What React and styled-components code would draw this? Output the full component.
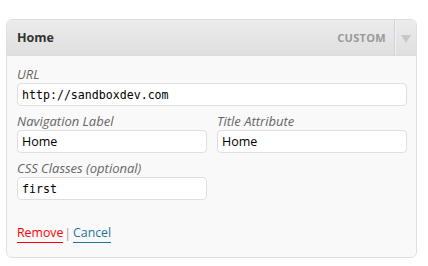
import React from 'react';
import styled, { createGlobalStyle } from 'styled-components';

const GlobalStyle = createGlobalStyle`
    body {
        margin: 0;
        background: #fff;
        font-family: "Open Sans", "Liberation Sans", sans-serif;
    }
`;

const Panel = styled.div`
    width: 409px;
    margin: 19px 0 0 6px;
    border: 1px solid #dfdfdf;
    border-radius: 6px;
    background: #f9f9f9;
    overflow: hidden;
`;

const Header = styled.div`
    height: 35px;
    display: flex;
    align-items: center;
    background: linear-gradient(to bottom, #ececec, #dfdfdf);
    border-bottom: 1px solid #dcdcdc;
`;

const Title = styled.div`
    flex: 1;
    padding-left: 10px;
    font-size: 12.5px;
    font-weight: 700;
    color: #333;
`;

const ItemType = styled.div`
    padding-right: 8px;
    font-size: 11px;
    font-weight: 700;
    color: #999;
    text-transform: uppercase;
    letter-spacing: 0.3px;
`;

const Toggle = styled.div`
    width: 22px;
    align-self: stretch;
    display: flex;
    align-items: center;
    justify-content: center;
    border-left: 1px solid #d2d2d2;
    box-shadow: inset 1px 0 0 #f2f2f2;
    padding-top: 3px;
    box-sizing: border-box;
`;

const Arrow = styled.div`
    width: 0;
    height: 0;
    border-left: 5px solid transparent;
    border-right: 5px solid transparent;
    border-top: 8px solid #c8c8c8;
`;

const Body = styled.div`
    padding: 10px 9px 14px 10px;
`;

const Row = styled.div`
    display: flex;
    gap: 10px;
    margin-bottom: 7px;
`;

const Field = styled.label`
    display: flex;
    flex-direction: column;
    width: ${p => (p.wide ? '390px' : '190px')};
`;

const Label = styled.span`
    font-size: 13px;
    font-style: italic;
    line-height: 17px;
    color: #666;
`;

const Input = styled.input`
    height: 23px;
    box-sizing: border-box;
    border: 1px solid #dfdfdf;
    border-radius: 4px;
    background: #fff;
    padding: 0 4px;
    font-family: ${p => (p.code ? '"DejaVu Sans Mono", "Liberation Mono", monospace' : '"Open Sans", "Liberation Sans", sans-serif')};
    font-size: ${p => (p.code ? '11.6px' : '12.5px')};
    color: #000;
    outline: none;
`;

const Actions = styled.div`
    margin-top: 24px;
    display: flex;
    align-items: center;
    font-size: 12.3px;
    line-height: 17px;
`;

const ActionLink = styled.a`
    color: ${p => p.color};
    text-decoration: none;
    border-bottom: 1px solid ${p => p.color};
    padding-bottom: 1px;
    cursor: pointer;
`;

const Sep = styled.span`
    color: #999;
    margin: 0 2px 0 1px;
`;

const App = () => {
    return (
        <>
            <GlobalStyle />
            <Panel>
                <Header>
                    <Title>Home</Title>
                    <ItemType>Custom</ItemType>
                    <Toggle><Arrow /></Toggle>
                </Header>
                <Body>
                    <Row>
                        <Field wide>
                            <Label>URL</Label>
                            <Input code defaultValue="http://sandboxdev.com" />
                        </Field>
                    </Row>
                    <Row>
                        <Field>
                            <Label>Navigation Label</Label>
                            <Input defaultValue="Home" />
                        </Field>
                        <Field>
                            <Label>Title Attribute</Label>
                            <Input defaultValue="Home" />
                        </Field>
                    </Row>
                    <Row>
                        <Field>
                            <Label>CSS Classes (optional)</Label>
                            <Input code defaultValue="first" />
                        </Field>
                    </Row>
                    <Actions>
                        <ActionLink color="#f00">Remove</ActionLink>
                        <Sep>|</Sep>
                        <ActionLink color="#21759b">Cancel</ActionLink>
                    </Actions>
                </Body>
            </Panel>
        </>
    );
};

export default App;
